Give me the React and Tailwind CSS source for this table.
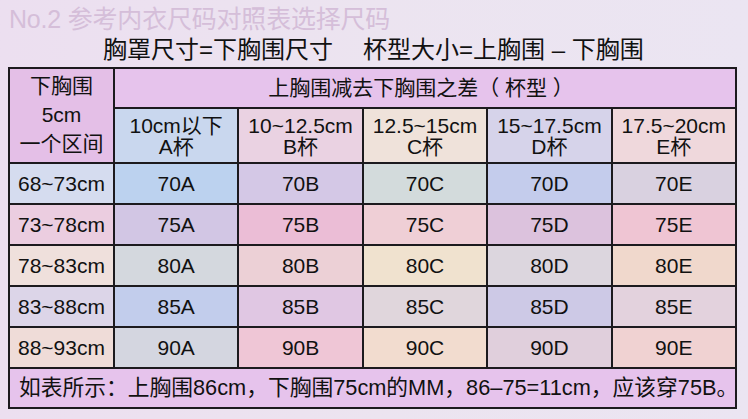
import React from "react";

const FONT = "font-['Liberation_Sans','Noto_Sans_CJK_SC',sans-serif]";

const subs = [
  ["10cm以下", "A杯", "bg-[#c9d7ee]"],
  ["10~12.5cm", "B杯", "bg-[#ead2e2]"],
  ["12.5~15cm", "C杯", "bg-[#efe2da]"],
  ["15~17.5cm", "D杯", "bg-[#d6d3ea]"],
  ["17.5~20cm", "E杯", "bg-[#efd8dc]"],
];

const rows = [
  {
    label: "68~73cm",
    lc: "bg-[#d5dcef]",
    cells: [
      ["70A", "bg-[#bcd2ef]"],
      ["70B", "bg-[#d4c8e6]"],
      ["70C", "bg-[#d3dbdc]"],
      ["70D", "bg-[#c4ccec]"],
      ["70E", "bg-[#d9d1e0]"],
    ],
  },
  {
    label: "73~78cm",
    lc: "bg-[#ebcde0]",
    cells: [
      ["75A", "bg-[#d2c6e4]"],
      ["75B", "bg-[#ebbdd6]"],
      ["75C", "bg-[#efcfd6]"],
      ["75D", "bg-[#dcc2dd]"],
      ["75E", "bg-[#efc5d3]"],
    ],
  },
  {
    label: "78~83cm",
    lc: "bg-[#efe0dc]",
    cells: [
      ["80A", "bg-[#d4d8de]"],
      ["80B", "bg-[#ecd0d6]"],
      ["80C", "bg-[#f0e2cf]"],
      ["80D", "bg-[#dcd6de]"],
      ["80E", "bg-[#f0d8cc]"],
    ],
  },
  {
    label: "83~88cm",
    lc: "bg-[#dcd5e8]",
    cells: [
      ["85A", "bg-[#c2cdec]"],
      ["85B", "bg-[#e0c7e3]"],
      ["85C", "bg-[#e0d6dc]"],
      ["85D", "bg-[#cdc9e6]"],
      ["85E", "bg-[#e3d2dd]"],
    ],
  },
  {
    label: "88~93cm",
    lc: "bg-[#efdcd8]",
    cells: [
      ["90A", "bg-[#d4d6e0]"],
      ["90B", "bg-[#efc6d6]"],
      ["90C", "bg-[#f2dccf]"],
      ["90D", "bg-[#e0cfdc]"],
      ["90E", "bg-[#f0d2d2]"],
    ],
  },
];

export default function App() {
  return (
    <div
      className={`${FONT} w-[748px] h-[419px] overflow-hidden bg-gradient-to-r from-[#ecdff0] via-[#ece4f0] to-[#ebe5f2] text-[#111]`}
    >
      <div className="h-[36px] pl-[9px] pt-[5px] text-[25px] leading-[28px] text-[#d5bed9] tracking-[-0.2px]">
        No.2 参考内衣尺码对照表选择尺码
      </div>
      <div className="h-[31px] pl-[103px] text-[24px] leading-[28px] text-[#111] flex">
        <span>胸罩尺寸=下胸围尺寸</span>
        <span className="ml-[30px]">杯型大小=上胸围 – 下胸围</span>
      </div>
      <div className="ml-[8px] w-[729px] grid grid-cols-[103px_repeat(5,1fr)] grid-rows-[38px_53px_repeat(5,39px)_38px] gap-[2px] p-[2px] bg-[#1c1a1e]">
        <div className="row-span-2 bg-[#e4bfe7] flex flex-col items-center justify-center text-[21px] leading-[29px] pb-[2px]">
          <span>下胸围</span>
          <span>5cm</span>
          <span>一个区间</span>
        </div>
        <div className="col-span-5 bg-[#e6c3ec] flex items-center justify-center text-[21px] pr-[8px]">
          上胸围减去下胸围之差（ 杯型 ）
        </div>
        {subs.map(([a, b, bg]) => (
          <div
            key={a}
            className={`${bg} flex flex-col items-center justify-center text-[21px] leading-[21px]`}
          >
            <span>{a}</span>
            <span>{b}</span>
          </div>
        ))}
        {rows.map((r) => (
          <React.Fragment key={r.label}>
            <div className={`${r.lc} flex items-center justify-center text-[21px]`}>
              {r.label}
            </div>
            {r.cells.map(([t, bg]) => (
              <div
                key={t}
                className={`${bg} flex items-center justify-center text-[21px]`}
              >
                {t}
              </div>
            ))}
          </React.Fragment>
        ))}
        <div className="col-span-6 bg-[#e6c3ec] flex items-center pl-[9px] text-[21.75px] whitespace-nowrap">
          如表所示：上胸围86cm，下胸围75cm的MM，86–75=11cm，应该穿75B。
        </div>
      </div>
    </div>
  );
}
